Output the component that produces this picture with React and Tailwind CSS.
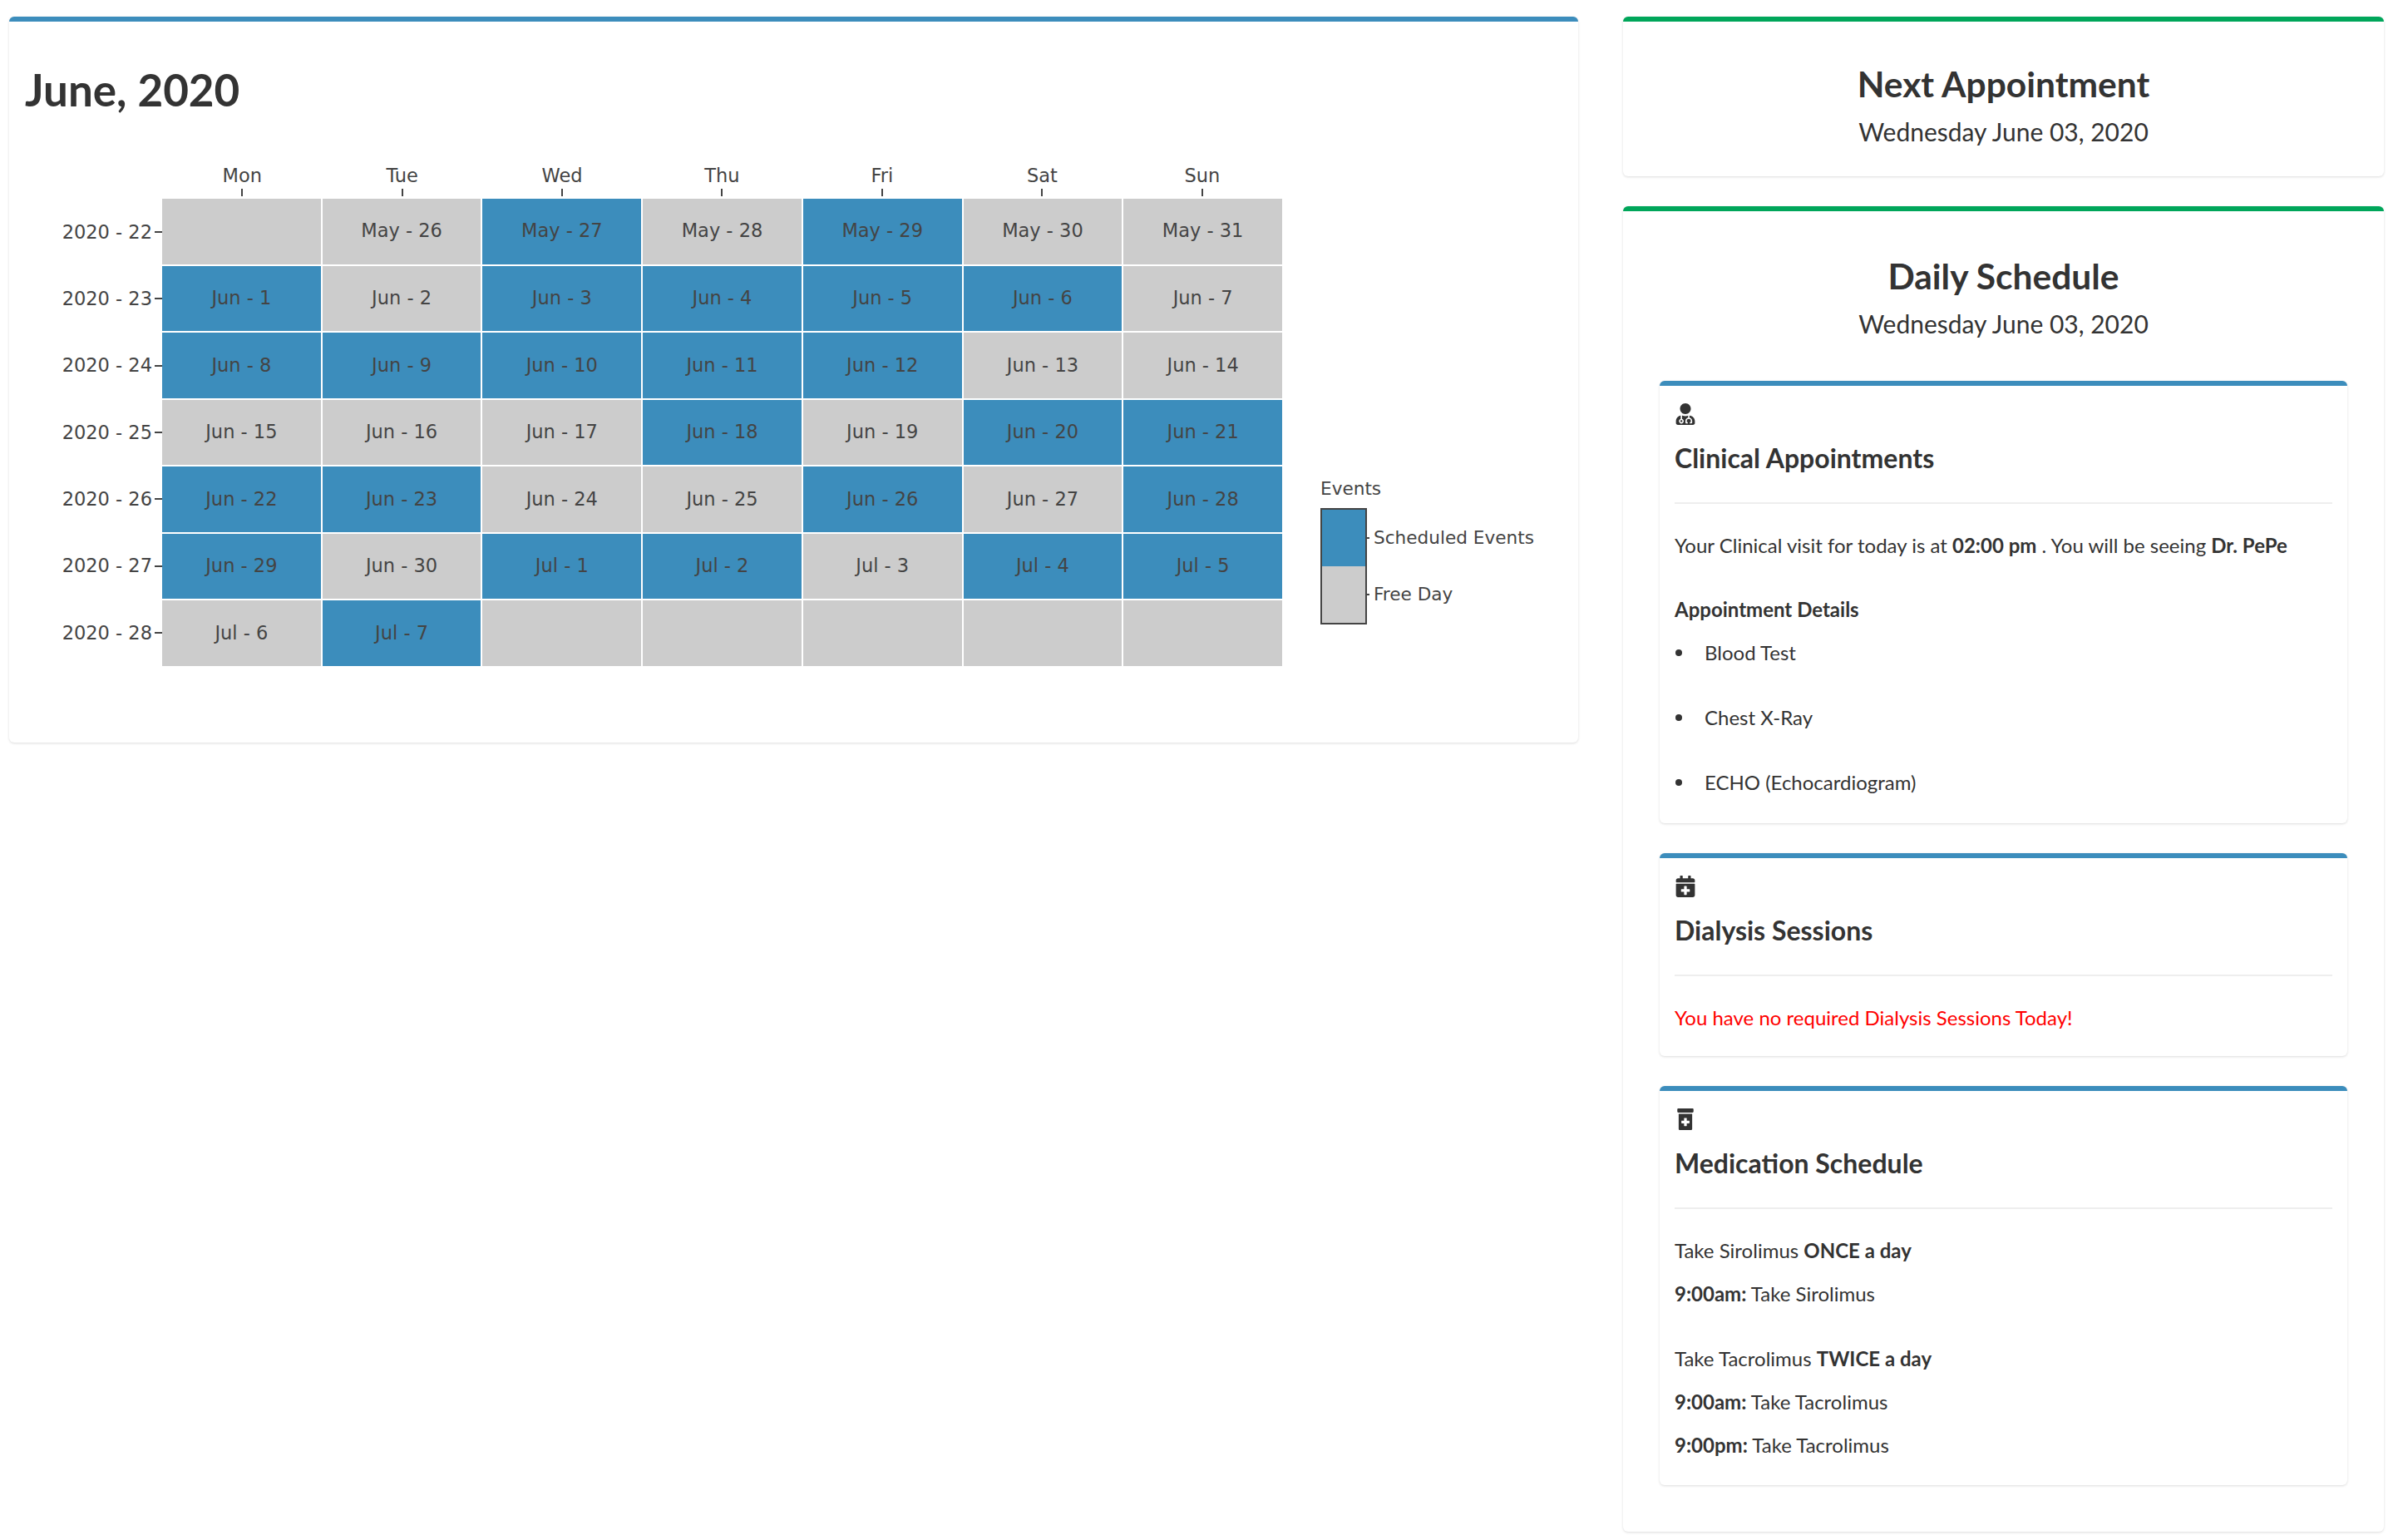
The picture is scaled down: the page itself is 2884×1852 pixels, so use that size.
import { FaUserMd, FaCalendarPlus, FaPrescriptionBottleAlt } from 'react-icons/fa'

const days = ['Mon', 'Tue', 'Wed', 'Thu', 'Fri', 'Sat', 'Sun']

const weeks = [
  { label: '2020 - 22', cells: [['', 0], ['May - 26', 0], ['May - 27', 1], ['May - 28', 0], ['May - 29', 1], ['May - 30', 0], ['May - 31', 0]] },
  { label: '2020 - 23', cells: [['Jun - 1', 1], ['Jun - 2', 0], ['Jun - 3', 1], ['Jun - 4', 1], ['Jun - 5', 1], ['Jun - 6', 1], ['Jun - 7', 0]] },
  { label: '2020 - 24', cells: [['Jun - 8', 1], ['Jun - 9', 1], ['Jun - 10', 1], ['Jun - 11', 1], ['Jun - 12', 1], ['Jun - 13', 0], ['Jun - 14', 0]] },
  { label: '2020 - 25', cells: [['Jun - 15', 0], ['Jun - 16', 0], ['Jun - 17', 0], ['Jun - 18', 1], ['Jun - 19', 0], ['Jun - 20', 1], ['Jun - 21', 1]] },
  { label: '2020 - 26', cells: [['Jun - 22', 1], ['Jun - 23', 1], ['Jun - 24', 0], ['Jun - 25', 0], ['Jun - 26', 1], ['Jun - 27', 0], ['Jun - 28', 1]] },
  { label: '2020 - 27', cells: [['Jun - 29', 1], ['Jun - 30', 0], ['Jul - 1', 1], ['Jul - 2', 1], ['Jul - 3', 0], ['Jul - 4', 1], ['Jul - 5', 1]] },
  { label: '2020 - 28', cells: [['Jul - 6', 0], ['Jul - 7', 1], ['', 0], ['', 0], ['', 0], ['', 0], ['', 0]] },
]

function Calendar() {
  return (
    <div className="flex font-['DejaVu_Sans',sans-serif] text-[22.5px] text-[#444]">
      {/* Week labels */}
      <div className="mt-[58px] grid h-[562px] w-[184px] grid-rows-7">
        {weeks.map((w) => (
          <div key={w.label} className="flex items-center justify-end">
            <span className="leading-none">{w.label}</span>
            <span className="ml-[3px] h-[2px] w-[9px] bg-[#444]" />
          </div>
        ))}
      </div>
      <div className="w-[1347px]">
        {/* Day labels */}
        <div className="grid h-[58px] grid-cols-7">
          {days.map((d) => (
            <div key={d} className="flex flex-col items-center pt-[18px]">
              <span className="h-[24px] leading-[24px]">{d}</span>
              <span className="mt-[4px] h-[9px] w-[2px] bg-[#444]" />
            </div>
          ))}
        </div>
        {/* Heatmap */}
        <div className="grid h-[562px] grid-cols-7 grid-rows-7 gap-[2px]">
          {weeks.flatMap((w) =>
            w.cells.map(([text, on], i) => (
              <div
                key={w.label + i}
                className={on ? 'flex items-center justify-center bg-[#3c8dbc]' : 'flex items-center justify-center bg-[#cccccc]'}
              >
                {text}
              </div>
            ))
          )}
        </div>
      </div>
      {/* Legend */}
      <div className="ml-[46px] mt-[394px] text-[21.6px]">
        <div className="h-[36px] leading-[26px]">Events</div>
        <div className="flex">
          <div className="flex h-[140px] w-[56px] flex-col border-2 border-[#444]">
            <div className="flex-1 bg-[#3c8dbc]" />
            <div className="flex-1 bg-[#cccccc]" />
          </div>
          <div className="flex h-[140px] flex-col justify-around py-[2px]">
            <div className="flex items-center">
              <span className="h-[2px] w-[3px] bg-[#444]" />
              <span className="ml-[5px]">Scheduled Events</span>
            </div>
            <div className="flex items-center">
              <span className="h-[2px] w-[3px] bg-[#444]" />
              <span className="ml-[5px]">Free Day</span>
            </div>
          </div>
        </div>
      </div>
    </div>
  )
}

function Section({ icon, title, className, children }) {
  return (
    <div className={`rounded-[6px] border-t-[6px] border-[#3c8dbc] bg-white px-[18px] shadow-[0_1px_3px_rgba(0,0,0,0.14)] ${className}`}>
      <div className="h-[45px] pt-[21px] text-[26px] leading-none text-[#333]">{icon}</div>
      <h3 className="mt-[22px] text-[32px] font-bold leading-[40px] text-[#333]">{title}</h3>
      <div className="mt-[33px] h-[2px] bg-[#eeeeee]" />
      {children}
    </div>
  )
}

function Bullet({ first, children }) {
  return (
    <li className={first ? 'flex items-center leading-[36px]' : 'mt-[42px] flex items-center leading-[36px]'}>
      <span className="ml-[1px] mr-[27px] h-[8px] w-[8px] rounded-full bg-[#333]" />
      {children}
    </li>
  )
}

export default function App() {
  return (
    <div className="flex h-[1852px] items-start bg-white pl-[11px] pt-[20px] font-['Lato',sans-serif] text-[24px] text-[#333]">
      <div className="h-[873px] w-[1887px] rounded-[6px] border-t-[6px] border-[#3c8dbc] bg-white shadow-[0_1px_3px_rgba(0,0,0,0.14)]">
        <h1 className="pl-[19px] pt-[52px] text-[53px] font-bold leading-[60px]">June, 2020</h1>
        <div className="pt-[43px]">
          <Calendar />
        </div>
      </div>

      <div className="ml-[54px] w-[915px]">
        <div className="h-[192px] rounded-[6px] border-t-[6px] border-[#00a65a] bg-white pt-[49px] text-center shadow-[0_1px_3px_rgba(0,0,0,0.14)]">
          <h2 className="text-[42.5px] font-bold leading-[52px]">Next Appointment</h2>
          <p className="mt-[9px] text-[30px] leading-[44px]">Wednesday June 03, 2020</p>
        </div>

        <div className="mt-[36px] h-[1594px] rounded-[6px] border-t-[6px] border-[#00a65a] bg-white px-[44px] pt-[52px] shadow-[0_1px_3px_rgba(0,0,0,0.14)]">
          <div className="text-center">
            <h2 className="text-[42.5px] font-bold leading-[52px]">Daily Schedule</h2>
            <p className="mt-[9px] text-[30px] leading-[44px]">Wednesday June 03, 2020</p>
          </div>

          <Section icon={<FaUserMd />} title="Clinical Appointments" className="mt-[47px] h-[532px]">
            <p className="mt-[32px] leading-[36px]">
              Your Clinical visit for today is at <b>02:00 pm</b> . You will be seeing <b>Dr. PePe</b>
            </p>
            <p className="mt-[41px] font-bold leading-[36px]">Appointment Details</p>
            <ul className="mt-[16px]">
              <Bullet first>Blood Test</Bullet>
              <Bullet>Chest X-Ray</Bullet>
              <Bullet>ECHO (Echocardiogram)</Bullet>
            </ul>
          </Section>

          <Section icon={<FaCalendarPlus />} title="Dialysis Sessions" className="mt-[36px] h-[244px]">
            <p className="mt-[32px] leading-[36px] text-[#ff0000]">You have no required Dialysis Sessions Today!</p>
          </Section>

          <Section icon={<FaPrescriptionBottleAlt />} title="Medication Schedule" className="mt-[36px] h-[480px]">
            <p className="mt-[32px] leading-[36px]">Take Sirolimus <b>ONCE a day</b></p>
            <p className="mt-[16px] leading-[36px]"><b>9:00am:</b> Take Sirolimus</p>
            <p className="mt-[42px] leading-[36px]">Take Tacrolimus <b>TWICE a day</b></p>
            <p className="mt-[16px] leading-[36px]"><b>9:00am:</b> Take Tacrolimus</p>
            <p className="mt-[16px] leading-[36px]"><b>9:00pm:</b> Take Tacrolimus</p>
          </Section>
        </div>
      </div>
    </div>
  )
}
